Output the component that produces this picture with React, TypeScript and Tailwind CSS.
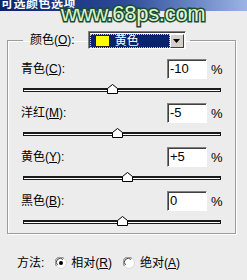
const base = "font-['Liberation_Sans','Noto_Sans_CJK_SC',sans-serif]";

function Thumb({ x }: { x: number }) {
  return (
    <svg
      className="absolute top-[5px]"
      style={{ left: x - 5 }}
      width="11"
      height="10"
      viewBox="0 0 11 10"
    >
      <polygon points="0.5,9.5 0.5,4.5 5.5,0.5 10.5,4.5 10.5,9.5" fill="#fff" stroke="#000" strokeWidth="1" />
    </svg>
  );
}

function Slider({ pos, last }: { pos: number; last?: boolean }) {
  return (
    <div className={last ? "relative h-[22px] pt-[9px]" : "relative h-[24px] pt-[9px]"}>
      <div className="ml-[2px] mr-[1px] h-[4px] border-x border-t-2 border-b border-[#1a1a1a] bg-white" />
      <Thumb x={pos} />
    </div>
  );
}

function Field({ label, keyChar, value }: { label: string; keyChar: string; value: string }) {
  return (
    <div className="flex h-[20px] items-center">
      <span className="flex-1 text-[12px] leading-none text-black">
        {label}(<span className="underline">{keyChar}</span>):
      </span>
      <div className="flex h-[20px] w-[40px] items-center border border-[#808080] border-b-white border-r-white bg-white pl-[2px] text-[13px] text-black shadow-[inset_1px_1px_0_#404040]">
        {value}
      </div>
      <span className="ml-[4px] w-[11px] whitespace-nowrap text-[13px] leading-none text-black">%</span>
    </div>
  );
}

function Radio({ checked }: { checked?: boolean }) {
  return (
    <svg width="12" height="12" viewBox="0 0 12 12">
      <circle cx="6" cy="6" r="5.5" fill="#fff" stroke="#d8d8d8" />
      <path d="M1.5 9 A5 5 0 0 1 9 1.5" fill="none" stroke="#808080" strokeWidth="1" />
      <path d="M2.5 8 A3.8 3.8 0 0 1 8 2.5" fill="none" stroke="#404040" strokeWidth="1" />
      {checked && <circle cx="6" cy="6" r="2" fill="#000" />}
    </svg>
  );
}

export default function App() {
  return (
    <div className={`relative h-[280px] w-[247px] overflow-hidden bg-[#ececec] ${base}`}>
      {/* Title bar */}
      <div className="h-[11px] overflow-hidden bg-gradient-to-r from-[#0a246a] via-[#2c4a98] to-[#9cb4e4]">
        <div className="-mt-[2px] pl-[1px] text-[12px] font-bold leading-[12px] tracking-[0.5px] text-white">
          可选颜色选项
        </div>
      </div>

      {/* watermark */}
      <div className="absolute left-[61px] top-[0px] text-[22px] leading-[27px] tracking-[-0.3px] text-[#d8f6c4] [-webkit-text-stroke:3px_#1d4a37] [paint-order:stroke_fill] font-['Liberation_Sans',sans-serif]">
        www.68ps.com
      </div>

      <fieldset className="ml-[7px] mt-[20px] w-[229px] border border-[#9c9c9c] pb-0 pl-[13px] pr-[13px] pt-[10px] shadow-[inset_1px_1px_0_#fff,1px_1px_0_#fff]">
        <legend className="ml-[2px] flex items-center pl-[7px] pr-[4px]">
          <span className="text-[12px] leading-none text-black">
            颜色(<span className="underline">O</span>):
          </span>
          <div className="ml-[13px] flex h-[18px] w-[98px] items-center border border-[#808080] border-b-white border-r-white bg-white shadow-[inset_1px_1px_0_#404040]">
            <div className="ml-[1px] mt-[1px] flex h-[14px] flex-1 items-center bg-[#0a246a] outline-1 outline-dotted outline-[#c8c8c8] -outline-offset-1">
              <div className="ml-[5px] h-[12px] w-[15px] border border-[#202020] bg-[#ffff00]" />
              <span className="ml-[5px] text-[12px] leading-none text-white">黄色</span>
            </div>
            <div className="mr-[1px] mt-[1px] flex h-[14px] w-[14px] items-center justify-center border border-white border-b-[#404040] border-r-[#404040] bg-[#d4d0c8]">
              <svg width="7" height="4" viewBox="0 0 7 4">
                <polygon points="0,0 7,0 3.5,4" fill="#000" />
              </svg>
            </div>
          </div>
        </legend>

        <Field label="青色" keyChar="C" value="-10" />
        <Slider pos={91} />
        <Field label="洋红" keyChar="M" value="-5" />
        <Slider pos={96} />
        <Field label="黄色" keyChar="Y" value="+5" />
        <Slider pos={106} />
        <Field label="黑色" keyChar="B" value="0" />
        <Slider pos={101} last />
      </fieldset>

      <div className="mt-[21px] flex items-center pl-[17px] text-[12px] leading-[16px] text-black">
        <span>方法:</span>
        <span className="ml-[11px] flex items-center">
          <Radio checked />
        </span>
        <span className="ml-[4px]">
          相对(<span className="underline">R</span>)
        </span>
        <span className="ml-[11px] flex items-center">
          <Radio />
        </span>
        <span className="ml-[5px]">
          绝对(<span className="underline">A</span>)
        </span>
      </div>
    </div>
  );
}
